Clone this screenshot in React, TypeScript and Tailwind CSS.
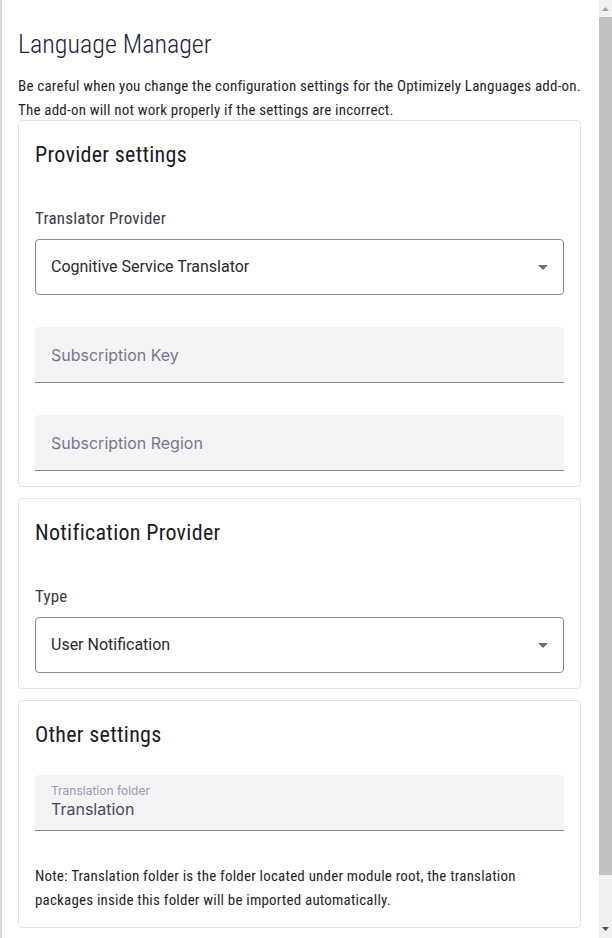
const condensed = {
  fontFamily: '"Roboto Condensed", "DejaVu Sans Condensed", "Liberation Sans Narrow", Roboto, sans-serif',
};

function SelectField({ label, value }: { label: string; value: string }) {
  return (
    <div>
      <div className="mt-[38px] text-[17px] leading-[22px] tracking-[0.2px] text-[#3a3a4c]">{label}</div>
      <div className="mt-[10px] flex h-[56px] items-center justify-between rounded-[4px] border border-[#8c8c8c] pl-[15px] pr-[14px]">
        <span className="font-['Roboto',sans-serif] text-[16px] text-[#2a2a2e]">{value}</span>
        <svg width="10" height="5" viewBox="0 0 10 5" className="mr-[1px]">
          <path d="M0 0h10L5 5z" fill="#6e6e6e" />
        </svg>
      </div>
    </div>
  );
}

function TextField({ placeholder }: { placeholder: string }) {
  return (
    <div className="mt-[32px] flex h-[56px] items-center rounded-t-[4px] border-b border-[#8a88a0] bg-[#f4f4f6] px-[16px]">
      <span className="font-['Inter',sans-serif] text-[16px] text-[#78768e]">{placeholder}</span>
    </div>
  );
}

function Card({ title, children }: { title: string; children: React.ReactNode }) {
  return (
    <section className="rounded-[4px] border border-[#e4e4e4] px-[16px] pt-[20px] pb-[15px]">
      <h2 className="text-[22px] leading-[28px] font-normal tracking-[0.3px] text-[#1a1a2a]">{title}</h2>
      {children}
    </section>
  );
}

export default function App() {
  return (
    <div className="flex h-[938px] w-[612px] overflow-hidden bg-white" style={condensed}>
      <div className="w-[2px] shrink-0 bg-[#d8d8d8]" />
      <main className="min-w-0 flex-1 pl-[16px] pr-[18px]">
        <h1 className="mt-[28px] text-[26px] leading-[32px] font-light text-[#22223a]">Language Manager</h1>
        <p className="mt-[14px] mb-[-2px] text-[15px] leading-[24px] tracking-[0.2px] text-[#1f1f2e]">
          Be careful when you change the configuration settings for the Optimizely Languages add-on.
          <br />
          The add-on will not work properly if the settings are incorrect.
        </p>

        <div className="flex flex-col gap-[11px]">
          <Card title="Provider settings">
            <SelectField label="Translator Provider" value="Cognitive Service Translator" />
            <TextField placeholder="Subscription Key" />
            <TextField placeholder="Subscription Region" />
          </Card>

          <Card title="Notification Provider">
            <SelectField label="Type" value="User Notification" />
          </Card>

          <Card title="Other settings">
            <div className="mt-[26px] flex h-[56px] flex-col rounded-t-[4px] border-b border-[#8a88a0] bg-[#f4f4f6] px-[16px] pt-[9px] font-['Inter',sans-serif]">
              <span className="text-[12px] leading-[14px] text-[#9c9aac]">Translation folder</span>
              <span className="mt-[1px] text-[16px] leading-[20px] text-[#4a4960]">Translation</span>
            </div>
            <p className="mt-[33px] text-[15px] leading-[24px] tracking-[0.2px] text-[#1f1f2e]">
              Note: Translation folder is the folder located under module root, the translation
              <br />
              packages inside this folder will be imported automatically.
            </p>
          </Card>
        </div>
      </main>

      <div className="flex w-[13px] shrink-0 flex-col bg-[#f1f1f1]">
        <div className="flex h-[17px] items-center justify-center">
          <svg width="7" height="4" viewBox="0 0 7 4">
            <path d="M0 4h7L3.5 0z" fill="#a3a3a3" />
          </svg>
        </div>
        <div className="h-[858px] bg-[#c1c1c1]" />
        <div className="flex flex-1 items-end justify-center pb-[7px]">
          <svg width="7" height="4" viewBox="0 0 7 4">
            <path d="M0 0h7L3.5 4z" fill="#505050" />
          </svg>
        </div>
      </div>
    </div>
  );
}
